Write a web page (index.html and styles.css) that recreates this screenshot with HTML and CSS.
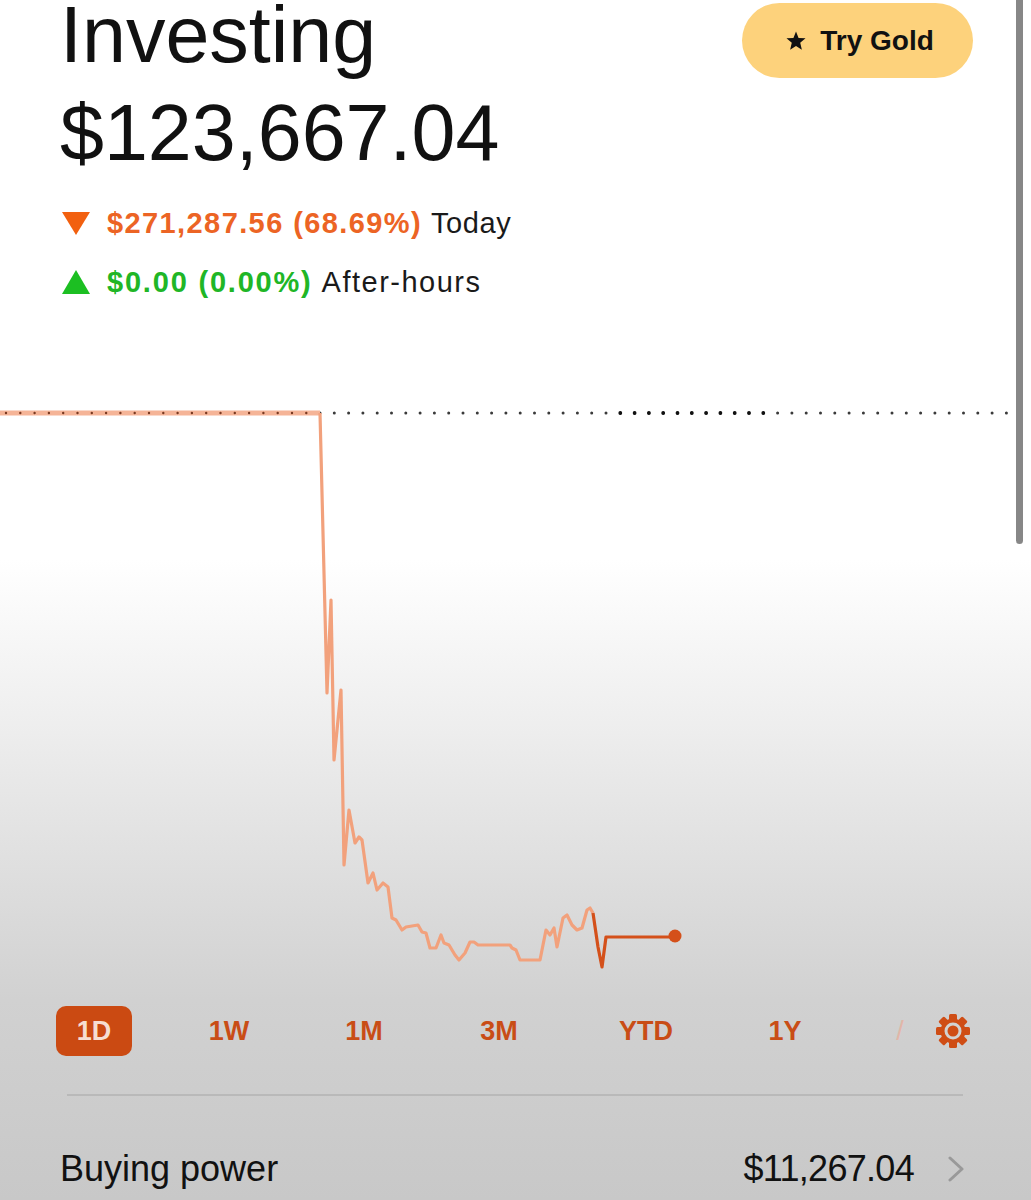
FILE: index.html
```html
<!DOCTYPE html>
<html>
    <head>
        <meta charset="utf-8">
        <title>Investing</title>
        <link rel="stylesheet" href="styles.css">
    </head>
    <body>
        <div class="scrollbar"></div>

        <header class="top">
            <div class="summary">
                <h1 class="title">Investing</h1>
                <div class="balance">$123,667.04</div>
            </div>
            <button class="gold">
                <svg class="star" viewBox="0 0 24 24" width="22" height="22">
                    <polygon points="12,1.5 14.8,8.6 22.4,9.1 16.6,14 18.4,21.5 12,17.4 5.6,21.5 7.4,14 1.6,9.1 9.2,8.6" fill="#111"/>
                </svg>
                Try Gold
            </button>
        </header>

        <ul class="changes">
            <li class="change down">
                <svg viewBox="0 0 28 23" width="28" height="23"><polygon points="0,0 28,0 14,23" fill="#f2600f"/></svg>
                <span class="amount">$271,287.56 (68.69%)</span>
                <span class="label">Today</span>
            </li>
            <li class="change up">
                <svg viewBox="0 0 28 24" width="28" height="24"><polygon points="14,0 28,24 0,24" fill="#1cbf22"/></svg>
                <span class="amount">$0.00 (0.00%)</span>
                <span class="label">After-hours</span>
            </li>
        </ul>

        <!-- chart uses page coordinates: top of svg is y=380 -->
        <svg class="chart" viewBox="0 380 1031 610" width="1031" height="610">
            <line x1="320" y1="413" x2="1031" y2="413" stroke="#3a3a3a" stroke-width="3" stroke-linecap="round" stroke-dasharray="0 14.3"/>
            <line x1="620.3" y1="413" x2="777" y2="413" stroke="#111" stroke-width="3.8" stroke-linecap="round" stroke-dasharray="0 14.3"/>
            <line x1="0" y1="413" x2="320" y2="413" stroke="#f5b497" stroke-width="5"/>
            <polyline fill="none" stroke="#f2a17c" stroke-width="3.2" stroke-linejoin="round"
                points="320,413 327,693 331,600 334,760 341,690 344,865 349,810 355,843 359,837 362,840 368,883 373,873 377,890 383,883 388,887 392,918 396,920 402,930 406,927 418,925 422,932 426,933 430,948 436,948 441,935 444,943 449,945 455,955 459,960 465,953 470,942 474,942 478,945 510,945 512,948 516,950 520,960 540,960 546,930 550,935 554,928 557,947 563,918 567,915 572,925 577,930 582,928 587,910 590,908 593,913"/>
            <line x1="0" y1="413" x2="320" y2="413" stroke="#7a3a22" stroke-width="2.4" stroke-linecap="round" stroke-dasharray="0 14.3" stroke-dashoffset="-6"/>
            <polyline fill="none" stroke="#d4501a" stroke-width="3.2" stroke-linejoin="round"
                points="593,913 598,947 602,967 606,937 675,937"/>
            <circle cx="675" cy="936" r="6.5" fill="#d4501a"/>
        </svg>

        <nav class="ranges">
            <span class="range active">1D</span>
            <span class="range">1W</span>
            <span class="range">1M</span>
            <span class="range">3M</span>
            <span class="range ytd">YTD</span>
            <span class="range year">1Y</span>
            <span class="range faded">/</span>
            <svg class="gear" viewBox="0 0 36 36" width="36" height="36">
                <g fill="#cf4d15" transform="translate(18 18)">
                    <rect x="-4" y="-17" width="8" height="9" rx="1.5"/>
                    <rect x="-4" y="-17" width="8" height="9" rx="1.5" transform="rotate(45)"/>
                    <rect x="-4" y="-17" width="8" height="9" rx="1.5" transform="rotate(90)"/>
                    <rect x="-4" y="-17" width="8" height="9" rx="1.5" transform="rotate(135)"/>
                    <rect x="-4" y="-17" width="8" height="9" rx="1.5" transform="rotate(180)"/>
                    <rect x="-4" y="-17" width="8" height="9" rx="1.5" transform="rotate(225)"/>
                    <rect x="-4" y="-17" width="8" height="9" rx="1.5" transform="rotate(270)"/>
                    <rect x="-4" y="-17" width="8" height="9" rx="1.5" transform="rotate(315)"/>
                    <circle r="12.5"/>
                    <circle r="8.5" fill="#d2d2d2"/>
                    <circle r="5.5"/>
                </g>
            </svg>
        </nav>

        <hr class="divider">

        <div class="buying">
            <span>Buying power</span>
            <span class="value">
                <span class="money">$11,267.04</span>
                <svg viewBox="0 0 18 26" width="18" height="26"><polyline points="3,2 15,13 3,24" fill="none" stroke="#999" stroke-width="3" stroke-linecap="round" stroke-linejoin="round"/></svg>
            </span>
        </div>
    </body>
</html>
```

FILE: styles.css
```css
html {
    height: 100%;
}
body {
    margin: 0;
    height: 1200px;
    overflow: hidden;
    position: relative;
    font-family: "Liberation Sans", Arial, sans-serif;
    color: #111;
    background: linear-gradient(to bottom, #fff 0, #fff 560px, #e6e6e6 800px, #d1d1d1 1000px, #c8c8c8 1200px);
}
.scrollbar {
    position: absolute;
    top: 0;
    right: 8px;
    width: 7px;
    height: 544px;
    background-color: #878787;
    border-radius: 0 0 4px 4px;
}
.top {
    display: flex;
    justify-content: space-between;
    align-items: flex-start;
    padding: 0 58px 0 60px;
}
.title {
    margin: 2px 0 0 0;
    font-size: 79px;
    font-weight: normal;
    line-height: 66px;
}
.balance {
    margin-top: 25px;
    font-size: 79px;
    line-height: 79px;
}
.gold {
    margin-top: 3px;
    width: 231px;
    height: 75px;
    border: 0;
    border-radius: 38px;
    background-color: #fdd27c;
    font-family: "Liberation Sans", Arial, sans-serif;
    font-size: 28px;
    font-weight: bold;
    color: #111;
    display: flex;
    align-items: center;
    justify-content: center;
    gap: 13px;
    padding: 0 0 0 4px;
}
.changes {
    list-style: none;
    margin: 33px 0 0 0;
    padding: 0 0 0 62px;
}
.change {
    display: flex;
    align-items: center;
    height: 36px;
    line-height: 36px;
    font-size: 29px;
}
.change + .change {
    margin-top: 23px;
}
.change svg {
    margin-right: 17px;
}
.amount {
    font-weight: bold;
    letter-spacing: 1.4px;
    margin-right: 9px;
}
.down .amount {
    color: #ec6424;
}
.up .amount {
    color: #20b626;
    letter-spacing: 1.8px;
}
.label {
    color: #1a1a1a;
    letter-spacing: 0.6px;
}
.up .label {
    letter-spacing: 1.5px;
}
.chart {
    display: block;
    margin-top: 80px;
}
.ranges {
    display: flex;
    align-items: center;
    height: 50px;
    margin-top: 16px;
    padding-left: 56px;
    gap: 59px;
}
.range {
    width: 76px;
    height: 50px;
    line-height: 50px;
    text-align: center;
    font-size: 27px;
    font-weight: bold;
    color: #c94d16;
}
.range.ytd {
    margin-left: 12px;
}
.range.year {
    margin-left: 4px;
}
.range.active {
    background-color: #cb4a12;
    color: #f6ded2;
    border-radius: 10px;
}
.range.faded {
    width: 20px;
    margin-left: 8px;
    font-weight: normal;
    color: #e2b6a8;
}
.gear {
    margin-left: -34px;
}
.divider {
    margin: 38px 68px 0 67px;
    border: 0;
    height: 2px;
    background-color: #b9b9b9;
}
.buying {
    display: flex;
    justify-content: space-between;
    align-items: center;
    margin-top: 53px;
    padding: 0 66px 0 60px;
    font-size: 36px;
    line-height: 40px;
}
.value {
    display: flex;
    align-items: center;
    gap: 33px;
}
.money {
    letter-spacing: -0.7px;
}
```
